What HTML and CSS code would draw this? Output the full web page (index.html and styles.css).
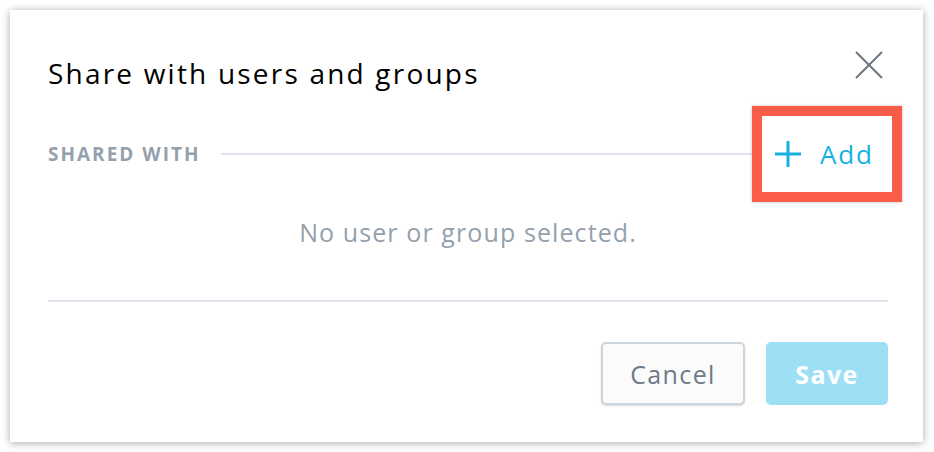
FILE: index.html
```html
<!DOCTYPE html>
<html lang="en">

<head>
    <meta charset="UTF-8">
    <title>Share with users and groups</title>
    <link rel="stylesheet" href="styles.css">
</head>

<body>

    <div class="dialog">
        <div class="dialog-header">
            <h2>Share with users and groups</h2>
            <button class="close" aria-label="Close">
                <svg width="28" height="28" viewBox="0 0 28 28">
                    <path d="M1 1 L27 27 M27 1 L1 27" stroke="#6d7680" stroke-width="2" fill="none"/>
                </svg>
            </button>
        </div>

        <div class="shared-row">
            <span class="shared-label">SHARED WITH</span>
            <span class="shared-line"></span>
            <div class="add-box">
                <button class="add-btn">
                    <svg width="26" height="26" viewBox="0 0 26 26">
                        <path d="M13 0 V26 M0 13 H26" stroke="#14b2e2" stroke-width="3" fill="none"/>
                    </svg>
                    <span>Add</span>
                </button>
            </div>
        </div>

        <p class="empty">No user or group selected.</p>

        <div class="footer">
            <button class="btn btn-cancel">Cancel</button>
            <button class="btn btn-save">Save</button>
        </div>
    </div>

</body>

</html>
```

FILE: styles.css
```css
body {
    margin: 0;
    background-color: #fff;
    font-family: "Open Sans", Lato, sans-serif;
}

.dialog {
    width: 913px;
    height: 432px;
    margin: 10px;
    box-sizing: border-box;
    padding: 0 35px 0 38px;
    background-color: #fff;
    box-shadow: 0 1px 8px rgba(0, 0, 0, 0.35);
    display: flex;
    flex-direction: column;
}

.dialog-header {
    display: flex;
    justify-content: space-between;
    align-items: flex-start;
    height: 96px;
}

.dialog-header h2 {
    margin: 45px 0 0;
    font-size: 28px;
    font-weight: 400;
    letter-spacing: 2.2px;
    color: #000;
    line-height: 36px;
}

.close {
    margin: 41px 5px 0 0;
    padding: 0;
    border: none;
    background: none;
    cursor: pointer;
}

.shared-row {
    display: flex;
    align-items: center;
    height: 96px;
    margin-right: -14px;
}

.shared-label {
    font-size: 19px;
    font-weight: 700;
    letter-spacing: 2px;
    color: #94a1ad;
}

.shared-line {
    flex: 1;
    height: 2px;
    margin-left: 20px;
    background-color: #dde3ec;
}

.add-box {
    border: 10px solid #f95d4a;
    width: 130px;
    height: 76px;
    display: flex;
    align-items: center;
    box-shadow: 0 0 3px rgba(0, 0, 0, 0.25);
    background-color: #fff;
}

.add-btn {
    display: flex;
    align-items: center;
    gap: 19px;
    margin-left: 13px;
    padding: 0;
    border: none;
    background: none;
    font-family: "Open Sans", Lato, sans-serif;
    font-size: 26px;
    letter-spacing: 1.8px;
    color: #14b2e2;
    cursor: pointer;
}

.empty {
    margin: 0;
    height: 100px;
    text-align: center;
    font-size: 25px;
    letter-spacing: 1.1px;
    color: #94a1ad;
    line-height: 60px;
    border-bottom: 2px solid #dfe4ee;
    box-sizing: border-box;
}

.footer {
    display: flex;
    justify-content: flex-end;
    gap: 21px;
    margin-top: 40px;
}

.btn {
    height: 63px;
    border-radius: 5px;
    font-family: "Open Sans", Lato, sans-serif;
    font-size: 25px;
    letter-spacing: 1.4px;
    cursor: pointer;
}

.btn-cancel {
    width: 144px;
    background-color: #fbfbfc;
    border: 2px solid #cdd6df;
    color: #6d7a87;
    box-shadow: 0 1px 2px rgba(0, 0, 0, 0.15);
}

.btn-save {
    width: 122px;
    background-color: #9ddff5;
    border: none;
    color: #fff;
    font-weight: 700;
}
```
